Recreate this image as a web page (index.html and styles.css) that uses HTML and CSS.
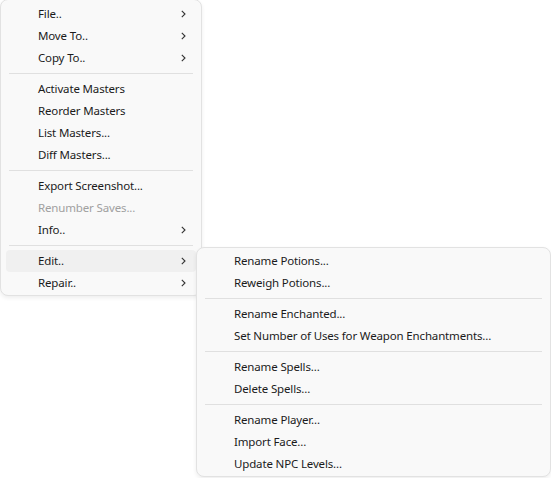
FILE: index.html
```html
<!DOCTYPE html>
<html>
<head>
<meta charset="utf-8">
<link rel="stylesheet" href="styles.css">
</head>
<body>
<div class="menu main">
  <div class="item"><span class="label">File..</span><svg class="arrow" viewBox="0 0 5 8"><path d="M0.8 0.8 L4 4 L0.8 7.2"/></svg></div>
  <div class="item"><span class="label">Move To..</span><svg class="arrow" viewBox="0 0 5 8"><path d="M0.8 0.8 L4 4 L0.8 7.2"/></svg></div>
  <div class="item"><span class="label">Copy To..</span><svg class="arrow" viewBox="0 0 5 8"><path d="M0.8 0.8 L4 4 L0.8 7.2"/></svg></div>
  <div class="sep"></div>
  <div class="item"><span class="label">Activate Masters</span></div>
  <div class="item"><span class="label">Reorder Masters</span></div>
  <div class="item"><span class="label">List Masters...</span></div>
  <div class="item"><span class="label">Diff Masters...</span></div>
  <div class="sep"></div>
  <div class="item"><span class="label">Export Screenshot...</span></div>
  <div class="item disabled"><span class="label">Renumber Saves...</span></div>
  <div class="item"><span class="label">Info..</span><svg class="arrow" viewBox="0 0 5 8"><path d="M0.8 0.8 L4 4 L0.8 7.2"/></svg></div>
  <div class="sep"></div>
  <div class="item active"><span class="label">Edit..</span><svg class="arrow" viewBox="0 0 5 8"><path d="M0.8 0.8 L4 4 L0.8 7.2"/></svg></div>
  <div class="item"><span class="label">Repair..</span><svg class="arrow" viewBox="0 0 5 8"><path d="M0.8 0.8 L4 4 L0.8 7.2"/></svg></div>
</div>
<div class="menu sub">
  <div class="item"><span class="label">Rename Potions...</span></div>
  <div class="item"><span class="label">Reweigh Potions...</span></div>
  <div class="sep"></div>
  <div class="item"><span class="label">Rename Enchanted...</span></div>
  <div class="item"><span class="label">Set Number of Uses for Weapon Enchantments...</span></div>
  <div class="sep"></div>
  <div class="item"><span class="label">Rename Spells...</span></div>
  <div class="item"><span class="label">Delete Spells...</span></div>
  <div class="sep"></div>
  <div class="item"><span class="label">Rename Player...</span></div>
  <div class="item"><span class="label">Import Face...</span></div>
  <div class="item"><span class="label">Update NPC Levels...</span></div>
</div>
</body>
</html>
```
FILE: styles.css
```css
html, body {
  margin: 0;
  padding: 0;
  background: #ffffff;
}
body {
  position: relative;
  width: 551px;
  height: 478px;
  overflow: hidden;
  font-family: "Noto Sans", "Open Sans", sans-serif;
  font-size: 11.5px;
  letter-spacing: -0.15px;
  color: #1b1b1b;
}
.menu {
  box-sizing: border-box;
  background: #f9f9f9;
  border: 1px solid #e2e2e2;
  border-radius: 8px;
  box-shadow: 0 2px 4px rgba(0, 0, 0, 0.07);
}
.main {
  width: 202px;
  margin-top: -1px;
  padding: 3px 0 1px;
}
.sub {
  position: absolute;
  left: 196px;
  top: 247px;
  width: 355px;
  padding: 2px 0 1px;
}
.item {
  height: 22px;
  margin: 0 5px;
  padding: 0 10px 0 32px;
  display: flex;
  align-items: center;
  border-radius: 4px;
}
.label {
  flex: 1;
  white-space: nowrap;
  line-height: 22px;
  margin-top: -1px;
}
.item.active {
  background: #f0f0f0;
}
.item.disabled {
  color: #a0a0a0;
}
.arrow {
  width: 5px;
  height: 8px;
  fill: none;
  stroke: #333333;
  stroke-width: 1.1;
}
.sep {
  height: 1px;
  margin: 4px 8px;
  background: #e0e0e0;
}
```
